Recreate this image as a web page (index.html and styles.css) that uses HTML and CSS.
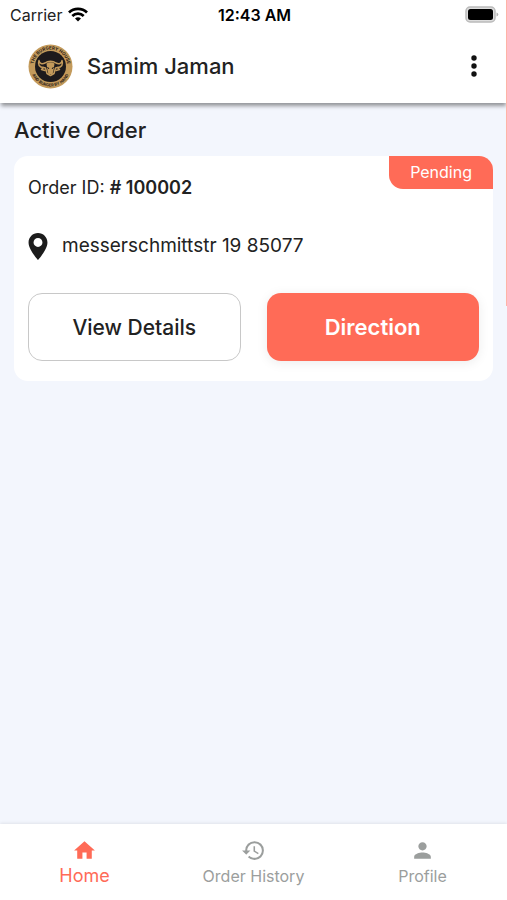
FILE: index.html
```
<!DOCTYPE html>
<html lang="en">
<head>
  <meta charset="UTF-8">
  <meta name="viewport" content="width=device-width, initial-scale=1.0">
  <title>Active Order</title>
  <link rel="stylesheet" href="styles.css">
</head>
<body>
  <div class="status-bar">
    <div class="carrier">
      <span>Carrier</span>
      <svg class="wifi" viewBox="0 0 20 15" fill="none" stroke="#000" stroke-width="2.7">
        <path d="M1 5.5a12.8 12.8 0 0 1 18 0"/>
        <path d="M4.3 9a8.2 8.2 0 0 1 11.4 0"/>
        <path d="M10 14.6l-3-3a4.3 4.3 0 0 1 6 0z" fill="#000" stroke="none"/>
      </svg>
    </div>
    <div class="time">12:43 AM</div>
    <div class="battery-box">
      <svg class="battery" viewBox="0 0 34 17">
        <rect x="1" y="1" width="29" height="15" rx="4" fill="#ddd" stroke="#bbb" stroke-width="1.5"/>
        <rect x="3" y="3" width="25" height="11" rx="2.5" fill="#000"/>
        <path d="M31.5 6.5v4q1.8-.5 1.8-2t-1.8-2z" fill="#b5b5b5"/>
      </svg>
    </div>
  </div>

  <header class="header">
    <svg class="avatar" viewBox="0 0 90 90">
      <defs>
        <path id="top-arc" d="M11 45a34 34 0 0 1 68 0"/>
        <path id="bottom-arc" d="M5 45a40 40 0 0 0 80 0"/>
      </defs>
      <circle cx="45" cy="45" r="44" fill="#c39a5b"/>
      <circle cx="45" cy="45" r="31" fill="#1d1a1c"/>
      <text class="logo-text" text-anchor="middle"><textPath href="#top-arc" startOffset="50%">THE BURGERY HOUSE</textPath></text>
      <text class="logo-text small" text-anchor="middle"><textPath href="#bottom-arc" startOffset="50%">AND BURGER BY HAND</textPath></text>
      <g fill="none" stroke="#c39a5b" stroke-width="3" stroke-linejoin="round" stroke-linecap="round">
        <path d="M22 33c1 6 6 8 12 5 6-5 16-5 22 0 6 3 11 1 12-5 3 8-1 14-9 14l-4 1-3 11-7 4-7-4-3-11-4-1c-8 0-12-6-9-14z"/>
        <path d="M31 47l-4 4 7 2M59 47l4 4-7 2"/>
      </g>
      <path d="M37 39q8-5 16 0l-2 14-2 7h-8l-2-7z" fill="#c39a5b"/>
      <path d="M39 46l3 4M51 46l-3 4" fill="none" stroke="#1d1a1c" stroke-width="2"/>
    </svg>
    <h1 class="user-name">Samim Jaman</h1>
    <button class="menu-btn" aria-label="More options">
      <svg viewBox="0 0 6 24" fill="#111">
        <circle cx="3" cy="4" r="2.7"/>
        <circle cx="3" cy="12" r="2.7"/>
        <circle cx="3" cy="20" r="2.7"/>
      </svg>
    </button>
  </header>

  <main class="content">
    <h2 class="title">Active Order</h2>
    <section class="card">
      <span class="badge">Pending</span>
      <p class="order-id">Order ID: <strong># 100002</strong></p>
      <div class="address">
        <svg class="pin" viewBox="5 2 14 20" fill="#1c1c1c">
          <path d="M12 2C8.13 2 5 5.13 5 9c0 5.25 7 13 7 13s7-7.75 7-13c0-3.87-3.13-7-7-7zm0 10.300a3.3 3.3 0 1 1 0-6.6 3.3 3.3 0 0 1 0 6.6z"/>
        </svg>
        <span>messerschmittstr 19 85077</span>
      </div>
      <div class="actions">
        <button class="btn outline">View Details</button>
        <button class="btn primary">Direction</button>
      </div>
    </section>
  </main>

  <nav class="bottom-nav">
    <a href="#" class="nav-item active">
      <svg viewBox="0 0 24 24"><path d="M10 20v-6h4v6h5v-8h3L12 3 2 12h3v8z"/></svg>
      <span>Home</span>
    </a>
    <a href="#" class="nav-item">
      <svg viewBox="0 0 24 24"><path d="M13 3a9 9 0 0 0-9 9H1l3.89 3.89.07.14L9 12H6c0-3.87 3.13-7 7-7s7 3.13 7 7-3.13 7-7 7c-1.93 0-3.68-.79-4.94-2.06l-1.42 1.42A8.95 8.95 0 0 0 13 21a9 9 0 0 0 0-18zm-1 5v5l4.28 2.54.72-1.21-3.5-2.08V8H12z"/></svg>
      <span>Order History</span>
    </a>
    <a href="#" class="nav-item">
      <svg viewBox="0 0 24 24"><path d="M12 12c2.21 0 4-1.79 4-4s-1.79-4-4-4-4 1.79-4 4 1.79 4 4 4zm0 2c-2.67 0-8 1.34-8 4v2h16v-2c0-2.66-5.33-4-8-4z"/></svg>
      <span>Profile</span>
    </a>
  </nav>
  <div class="edge-line"></div>
</body>
</html>
```

FILE: styles.css
```
* {
  box-sizing: border-box;
}

body {
  margin: 0;
  min-height: 100vh;
  display: flex;
  flex-direction: column;
  position: relative;
  background-color: #f3f6fd;
  color: #222;
  font-family: Inter, Roboto, sans-serif;
}

h1, h2, p {
  margin: 0;
  font-weight: 500;
}

button {
  font-family: inherit;
  cursor: pointer;
}

svg {
  display: block;
}

/* status bar */
.status-bar {
  display: grid;
  grid-template-columns: 1fr auto 1fr;
  align-items: center;
  height: 29px;
  padding: 0 8px 0 10px;
  background-color: #fff;
  font-size: 16px;
}

.carrier {
  display: flex;
  align-items: center;
  gap: 6px;
}

.wifi {
  width: 20px;
  height: 15px;
}

.time {
  font-weight: 600;
  color: #000;
}

.battery-box {
  display: flex;
  justify-content: flex-end;
}

.battery {
  width: 34px;
  height: 17px;
}

/* header */
.header {
  display: flex;
  align-items: center;
  height: 74px;
  padding: 0 20px 0 28px;
  background-color: #fff;
  box-shadow: 0 4px 4px -1px rgba(0, 0, 0, 0.4);
}

.avatar {
  width: 45px;
  height: 45px;
}

.logo-text {
  font-size: 9px;
  font-weight: 700;
  fill: #2a2018;
}

.logo-text.small {
  font-size: 8px;
}

.user-name {
  flex: 1;
  margin-left: 14px;
  font-size: 22px;
}

.menu-btn {
  padding: 0 10px;
  border: none;
  background: none;
}

.menu-btn svg {
  width: 6px;
  height: 24px;
}

/* content */
.content {
  flex: 1;
  padding: 14px;
}

.title {
  margin-bottom: 13px;
  font-size: 22px;
  line-height: 26px;
}

.card {
  position: relative;
  padding: 14px 14px 20px;
  border-radius: 14px;
  background-color: #fff;
}

.badge {
  position: absolute;
  top: 0;
  right: 0;
  padding: 0 21px;
  border-radius: 0 14px 0 14px;
  background-color: #ff6b57;
  color: #fff;
  font-size: 16px;
  line-height: 33px;
}

.order-id {
  font-size: 18px;
  font-weight: 400;
  line-height: 36px;
}

.order-id strong {
  font-weight: 600;
}

.address {
  display: flex;
  align-items: center;
  gap: 14px;
  margin: 26px 0 33px;
  font-size: 19px;
  line-height: 28px;
}

.pin {
  width: 20px;
  height: 27px;
}

.actions {
  display: grid;
  grid-template-columns: 1fr 1fr;
  gap: 26px;
}

.btn {
  height: 68px;
  padding: 0;
  border: none;
  border-radius: 14px;
  font-size: 21px;
  font-weight: 500;
}

.outline {
  border: 1px solid #c8c8c8;
  background-color: #fff;
  color: #222;
}

.primary {
  background-color: #ff6b57;
  color: #fff;
  font-size: 22px;
  font-weight: 600;
  box-shadow: 0 2px 12px rgba(0, 0, 0, 0.08);
}

/* bottom navigation */
.bottom-nav {
  display: flex;
  height: 76px;
  background-color: #fff;
  box-shadow: 0 -1px 3px rgba(0, 0, 0, 0.08);
}

.nav-item {
  flex: 1;
  display: flex;
  flex-direction: column;
  align-items: center;
  padding-top: 14px;
  color: #9b9e9d;
  font-size: 16px;
  line-height: 26px;
  text-decoration: none;
}

.nav-item svg {
  width: 25px;
  height: 25px;
  fill: currentColor;
}

.nav-item.active {
  color: #ff6b57;
  font-size: 18px;
}

/* thin line on the right edge of the screen */
.edge-line {
  position: absolute;
  top: 0;
  right: 0;
  width: 1px;
  height: 34%;
  background-color: #ffb3a6;
}
```
